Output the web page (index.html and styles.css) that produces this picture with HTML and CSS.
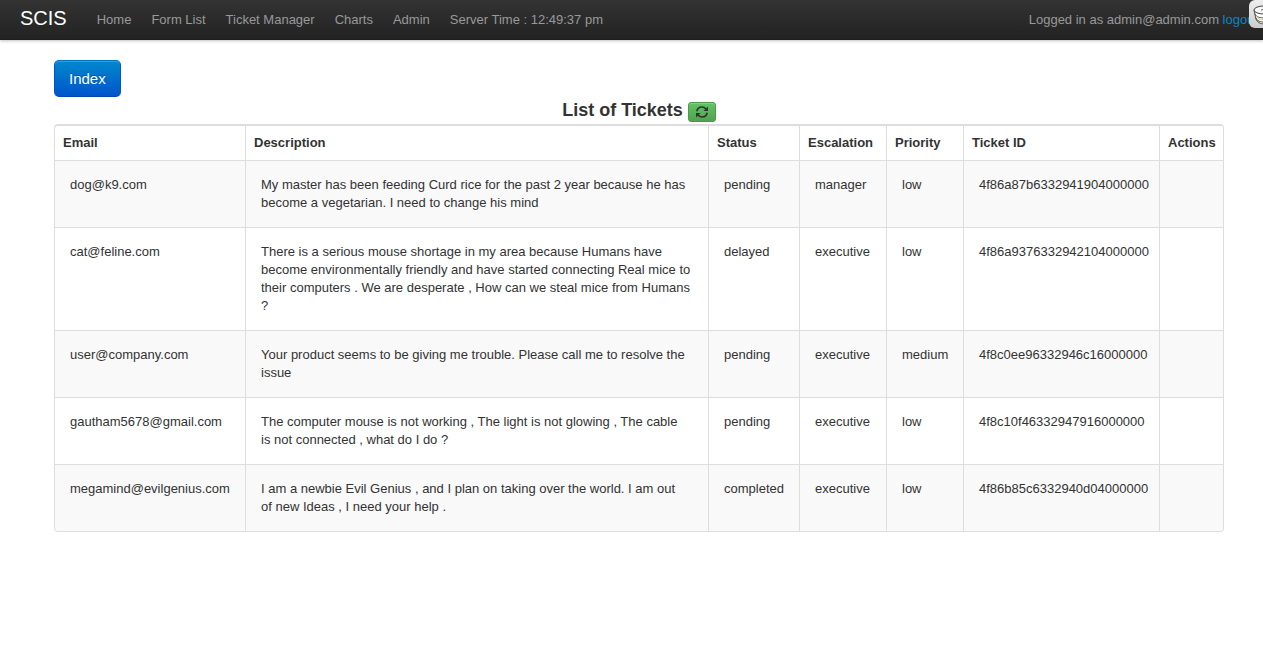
FILE: index.html
```
<!DOCTYPE html>
<html lang="en">
<head>
<meta charset="utf-8">
<title>SCIS - Ticket Manager</title>
<link rel="stylesheet" href="styles.css">
</head>
<body>
<header class="navbar">
  <a class="brand" href="#">SCIS</a>
  <nav class="nav">
    <a href="#">Home</a>
    <a href="#">Form List</a>
    <a href="#">Ticket Manager</a>
    <a href="#">Charts</a>
    <a href="#">Admin</a>
    <span>Server Time : 12:49:37 pm</span>
  </nav>
  <p class="login">Logged in as admin@admin.com <a href="#">logout</a></p>
  <button class="debug-tab" type="button" aria-label="Database panel">
    <svg width="24" height="24" viewBox="0 0 24 24">
      <path d="M1 7l2 9c1 3 4 5 9 5s9-2 10-5V7z" fill="#fff" stroke="#444"/>
      <path d="M2 11c1 3 5 4 10 4M3 15c1 3 4 4 9 4" fill="none" stroke="#555"/>
      <path d="M3 13c1 2 4 4 8 4" fill="none" stroke="#d6d68c"/>
      <ellipse cx="11" cy="7" rx="10" ry="4" fill="#f7f7f7" stroke="#444"/>
      <path d="M8 7l4-1" stroke="#666"/>
    </svg>
  </button>
</header>
<main class="page">
  <div class="container">
    <button class="btn btn-primary" type="button">Index</button>
    <div class="title-row">
      <h1>List of Tickets</h1>
      <button class="btn-refresh" type="button" aria-label="Refresh">
        <svg width="14" height="14" viewBox="0 0 14 14" fill="none" stroke="#333" stroke-width="1.7">
          <path d="M1.800 6.200C2.400 3.500 4.400 2 6.800 2c1.800 0 3.200.8 4.200 2M12.200 7.800C11.600 10.500 9.600 12 7.200 12c-1.800 0-3.200-.8-4.200-2"/>
          <path d="M13 1.500V6H8.500zM1 12.500V8h4.500z" fill="#333" stroke="none"/>
        </svg>
      </button>
    </div>
    <table class="tickets">
      <colgroup>
        <col class="col-email"><col><col class="col-status"><col class="col-escalation"><col class="col-priority"><col class="col-id"><col class="col-actions">
      </colgroup>
      <thead>
        <tr><th>Email</th><th class="description">Description</th><th>Status</th><th>Escalation</th><th>Priority</th><th>Ticket ID</th><th>Actions</th></tr>
      </thead>
      <tbody>
        <tr><td>dog@k9.com</td><td class="description">My master has been feeding Curd rice for the past 2 year because he has become a vegetarian. I need to change his mind</td><td>pending</td><td>manager</td><td>low</td><td>4f86a87b6332941904000000</td><td></td></tr>
        <tr><td>cat@feline.com</td><td class="description">There is a serious mouse shortage in my area because Humans have become environmentally friendly and have started connecting Real mice to their computers . We are desperate , How can we steal mice from Humans ?</td><td>delayed</td><td>executive</td><td>low</td><td>4f86a9376332942104000000</td><td></td></tr>
        <tr><td>user@company.com</td><td class="description">Your product seems to be giving me trouble. Please call me to resolve the issue</td><td>pending</td><td>executive</td><td>medium</td><td>4f8c0ee96332946c16000000</td><td></td></tr>
        <tr><td>gautham5678@gmail.com</td><td class="description">The computer mouse is not working , The light is not glowing , The cable<br>is not connected , what do I do ?</td><td>pending</td><td>executive</td><td>low</td><td>4f8c10f46332947916000000</td><td></td></tr>
        <tr><td>megamind@evilgenius.com</td><td class="description">I am a newbie Evil Genius , and I plan on taking over the world. I am out<br>of new Ideas , I need your help .</td><td>completed</td><td>executive</td><td>low</td><td>4f86b85c6332940d04000000</td><td></td></tr>
      </tbody>
    </table>
  </div>
</main>
</body>
</html>
```
FILE: styles.css
```
* { box-sizing: border-box; }

body {
  margin: 0;
  background: #fff;
  color: #333;
  font: 13px/18px "Liberation Sans", Arial, sans-serif;
}

.navbar {
  position: relative;
  display: flex;
  align-items: center;
  height: 40px;
  padding: 0 5px 0 20px;
  background: linear-gradient(#333, #222);
  box-shadow: 0 1px 3px rgba(0, 0, 0, .25), inset 0 -1px 0 rgba(0, 0, 0, .1);
  color: #999;
  white-space: nowrap;
}

.brand {
  margin-right: 20px;
  padding-bottom: 4px;
  color: #fff;
  font-size: 20px;
  line-height: 20px;
  text-decoration: none;
}

.nav { display: flex; }

.nav a,
.nav span {
  padding: 10px;
  color: #999;
  text-decoration: none;
}

.login { margin: 0 0 0 auto; }

.login a {
  color: #08c;
  text-decoration: none;
}

.debug-tab {
  position: absolute;
  top: 0;
  right: 0;
  width: 14px;
  height: 28px;
  padding: 2px 0 0 4px;
  overflow: hidden;
  border: 0;
  border-radius: 6px 0 0 6px;
  background: linear-gradient(#eee, #ccc);
}

.debug-tab svg { display: block; }

.page { padding: 20px 0 20px 15px; }

.container {
  max-width: 1170px;
  margin: 0 auto;
}

.btn {
  display: block;
  padding: 8px 14px;
  border: 1px solid #0055cc;
  border-color: #0074c4 #0055cc #0048b0;
  border-radius: 5px;
  font: 15px/19px "Liberation Sans", Arial, sans-serif;
}

.btn-primary {
  background: linear-gradient(#08c, #05c);
  box-shadow: inset 0 1px 0 rgba(255, 255, 255, .2);
  color: #fff;
  text-shadow: 0 -1px 0 rgba(0, 0, 0, .25);
}

.title-row {
  display: flex;
  justify-content: center;
  gap: 5px;
  height: 27px;
}

.title-row h1 {
  margin: 0;
  font-size: 18px;
  line-height: 26px;
}

.btn-refresh {
  display: flex;
  align-items: center;
  justify-content: center;
  width: 28px;
  height: 20px;
  margin-top: 5px;
  padding: 0;
  border: 1px solid #4a9a4a;
  border-radius: 3px;
  background: linear-gradient(#62c462, #51a351);
  box-shadow: inset 0 1px 0 rgba(255, 255, 255, .2);
}

.tickets {
  width: 100%;
  table-layout: fixed;
  border: 1px solid #ddd;
  border-left: 0;
  border-radius: 4px;
  border-spacing: 0;
  border-collapse: separate;
}

.col-email { width: 191px; }
.col-status { width: 91px; }
.col-escalation { width: 87px; }
.col-priority { width: 77px; }
.col-id { width: 196px; }
.col-actions { width: 64px; }

.tickets th,
.tickets td {
  border-top: 1px solid #ddd;
  border-left: 1px solid #ddd;
  text-align: left;
  vertical-align: top;
  white-space: nowrap;
}

.tickets th { padding: 8px; }

.tickets td { padding: 15px; }

.tickets tbody tr:nth-child(odd) td { background: #f9f9f9; }

.tickets .description { white-space: normal; }

.tickets tr:first-child th:first-child { border-top-left-radius: 4px; }

.tickets tbody tr:last-child td:first-child { border-bottom-left-radius: 4px; }

.tickets tbody tr:last-child td:last-child { border-bottom-right-radius: 4px; }
```
